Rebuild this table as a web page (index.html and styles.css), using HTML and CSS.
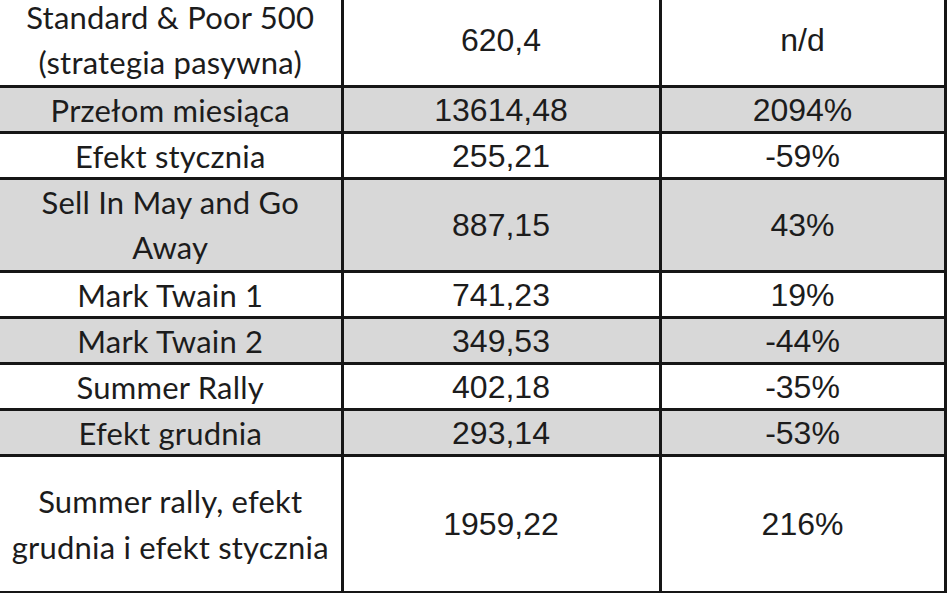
FILE: index.html
```html
<!DOCTYPE html>
<html lang="pl">
<head>
<meta charset="utf-8">
<title>Strategie sezonowe</title>
<link rel="stylesheet" href="styles.css">
</head>
<body>
<table class="results">
  <colgroup>
    <col class="c-name">
    <col class="c-value">
    <col class="c-change">
  </colgroup>
  <tbody>
    <tr class="row-2">
      <td class="name">Standard &amp; Poor 500<br>(strategia pasywna)</td>
      <td class="num">620,4</td>
      <td class="num">n/d</td>
    </tr>
    <tr class="row-1 shaded">
      <td class="name">Przełom miesiąca</td>
      <td class="num">13614,48</td>
      <td class="num">2094%</td>
    </tr>
    <tr class="row-1">
      <td class="name">Efekt stycznia</td>
      <td class="num">255,21</td>
      <td class="num">-59%</td>
    </tr>
    <tr class="row-2 shaded">
      <td class="name">Sell In May and Go<br>Away</td>
      <td class="num">887,15</td>
      <td class="num">43%</td>
    </tr>
    <tr class="row-1">
      <td class="name">Mark Twain 1</td>
      <td class="num">741,23</td>
      <td class="num">19%</td>
    </tr>
    <tr class="row-1 shaded">
      <td class="name">Mark Twain 2</td>
      <td class="num">349,53</td>
      <td class="num">-44%</td>
    </tr>
    <tr class="row-1">
      <td class="name">Summer Rally</td>
      <td class="num">402,18</td>
      <td class="num">-35%</td>
    </tr>
    <tr class="row-1 shaded">
      <td class="name">Efekt grudnia</td>
      <td class="num">293,14</td>
      <td class="num">-53%</td>
    </tr>
    <tr class="row-3">
      <td class="name">Summer rally, efekt<br>grudnia i efekt stycznia</td>
      <td class="num">1959,22</td>
      <td class="num">216%</td>
    </tr>
  </tbody>
</table>
</body>
</html>
```

FILE: styles.css
```css
html, body {
  margin: 0;
  padding: 0;
  background: #ffffff;
  overflow: hidden;
}

body {
  width: 948px;
  height: 593px;
}

.results {
  border-collapse: collapse;
  table-layout: fixed;
  width: 945px;
  margin-top: -8px;
  margin-left: 0;
  color: #1c1c1c;
}

.c-name { width: 342px; }
.c-value { width: 318px; }
.c-change { width: 285px; }

.results td {
  border: 3px solid #161616;
  padding: 0;
  text-align: center;
  vertical-align: middle;
  overflow: hidden;
  white-space: nowrap;
}

.results tr td:first-child {
  border-left: none;
}

.row-1 td { height: 43px; }
.row-2 td { height: 90px; }
.row-3 td { height: 134px; }

.shaded td {
  background: #d8d8d8;
}

.name {
  font-family: Lato, "Noto Sans", sans-serif;
  font-size: 31px;
  line-height: 45px;
  letter-spacing: 0.2px;
}

.row-1 .name {
  line-height: 40px;
}

.row-3 .name {
  line-height: 46px;
}

.num {
  font-family: "Liberation Sans", Arial, sans-serif;
  font-size: 32px;
  line-height: 40px;
}
```
